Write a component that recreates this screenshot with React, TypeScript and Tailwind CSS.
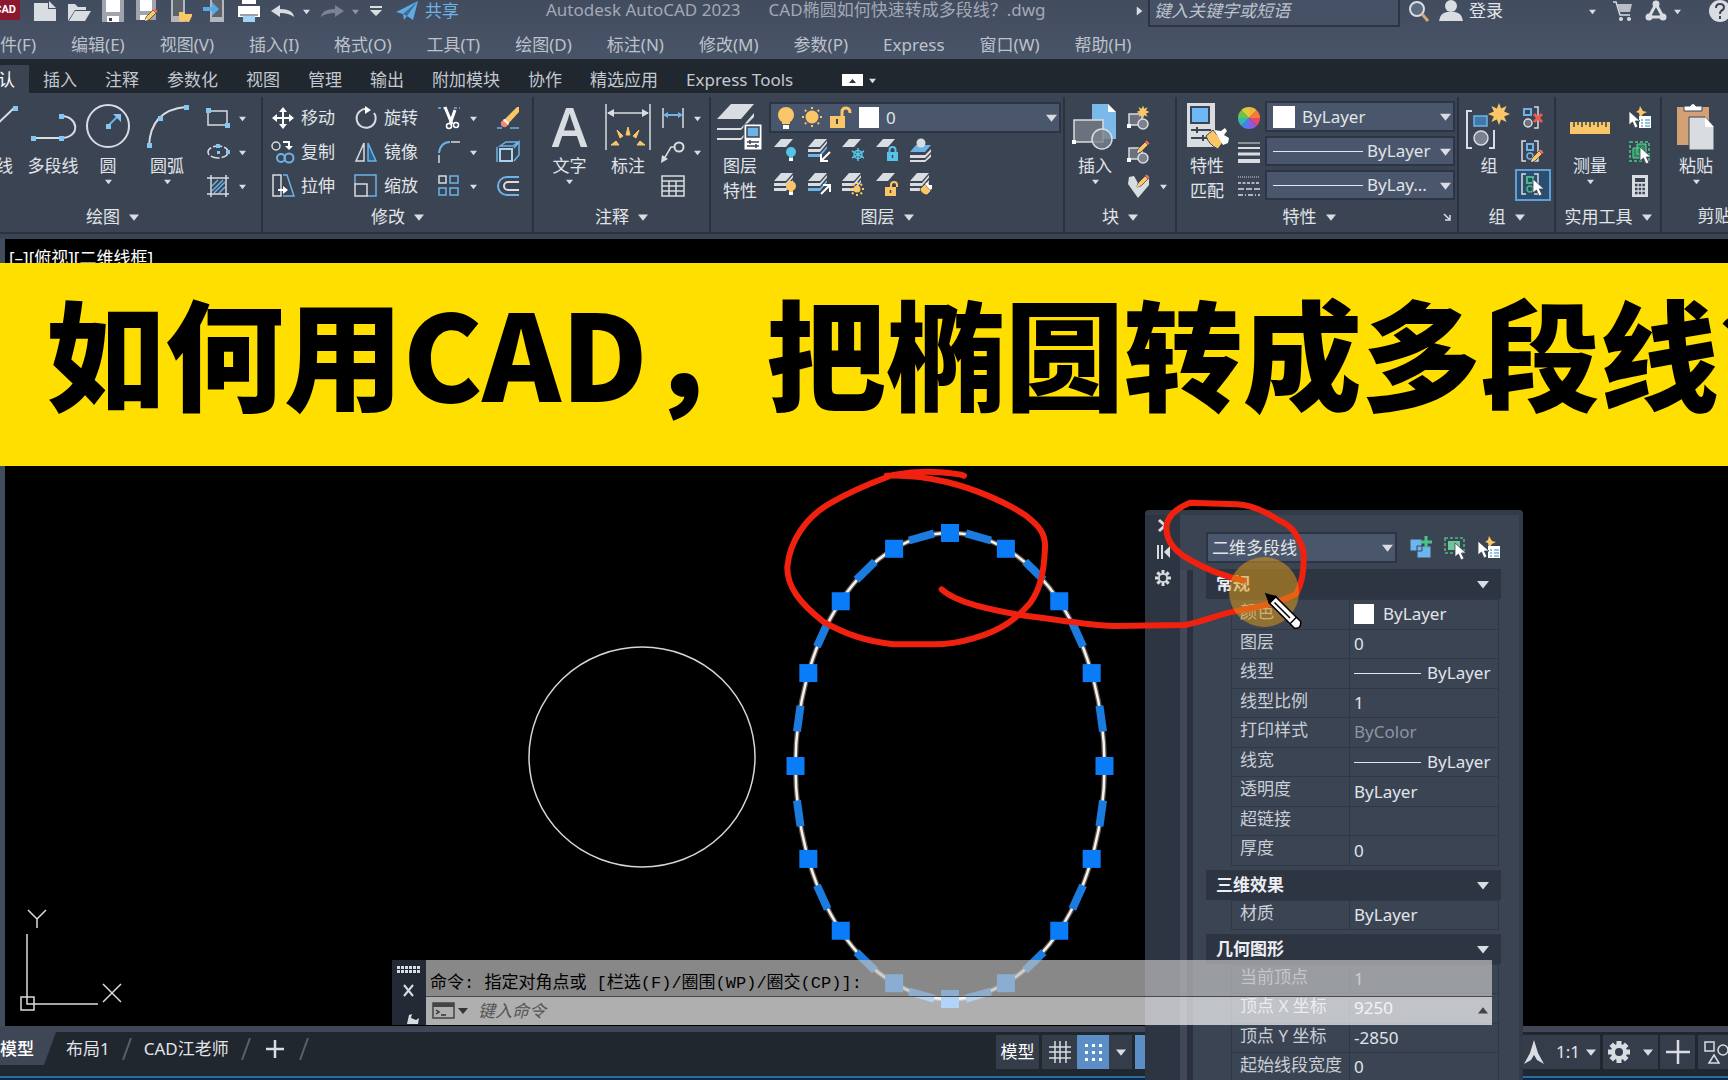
import React from 'react';
import type { ReactNode } from 'react';

const LIGHT = '#d9dce1';
const BLUE = '#6db3e8';
const GOLD = '#fbc667';

const Svg = ({ w = 24, h = 24, className = '', children }: { w?: number; h?: number; className?: string; children: ReactNode }) => (
  <svg width={w} height={h} viewBox={`0 0 ${w} ${h}`} fill="none" className={`shrink-0 ${className}`} aria-hidden="true">
    {children}
  </svg>
);

const Caret = ({ size = 8, color = LIGHT }: { size?: number; color?: string }) => (
  <svg width={size} height={size} viewBox="0 0 8 8" className="shrink-0" aria-hidden="true">
    <path d="M0 2h8L4 7z" fill={color} />
  </svg>
);

const Dot = ({ x, y }: { x: number; y: number }) => <rect x={x - 2} y={y - 2} width="5" height="5" fill="#83c8f4" />;

const Pencil = ({ x = 0, y = 0 }: { x?: number; y?: number }) => (
  <g transform={`translate(${x} ${y})`}>
    <path d="M0 13l1-4 7-7 3 3-7 7z" fill={GOLD} stroke="#3b3027" strokeWidth=".7" />
    <path d="M8 2l1.500-1.500q1 0 3 3L11 5z" fill="#ef7264" />
    <path d="M0 13l1-3 2 2z" fill="#f3ead8" />
  </g>
);

const Bulb = ({ x, y, c = GOLD }: { x: number; y: number; c?: string }) => (
  <g transform={`translate(${x} ${y})`}>
    <circle cx="5" cy="5" r="5" fill={c} />
    <path d="M3 9h4v3H3z" fill={c} />
    <path d="M3 11h4v3H3z" fill="#fff" />
  </g>
);

const Sun = ({ x, y, r = 4 }: { x: number; y: number; r?: number }) => (
  <g transform={`translate(${x} ${y})`}>
    <circle r={r} fill={GOLD} />
    {[0, 45, 90, 135, 180, 225, 270, 315].map((a) => (
      <path key={a} d={`M0 ${-r - 1.5}v-2`} stroke={GOLD} strokeWidth="2" transform={`rotate(${a})`} />
    ))}
  </g>
);

const Star = ({ x, y, s = 1 }: { x: number; y: number; s?: number }) => (
  <path
    transform={`translate(${x} ${y}) scale(${s})`}
    d="M0-13l2.500 6.500 6.500-3-3 6.500 7 3-7 3 3 6.500-6.500-3L0 13l-2.500-6.500-6.500 3 3-6.500-7-3 7-3-3-6.500 6.500 3z"
    fill={GOLD}
  />
);

const Lock = ({ x, y, c, open = false }: { x: number; y: number; c: string; open?: boolean }) => (
  <g transform={`translate(${x} ${y})`}>
    <path d={open ? 'M6 6V3a3 3 0 0 1 6 0v2' : 'M2.500 6V3a3 3 0 0 1 6 0v3'} stroke={c} strokeWidth="2" />
    <rect y="5" width="11" height="9" fill={c} />
    <path d="M5.500 8v3" stroke="#3b4453" strokeWidth="1.500" />
  </g>
);

const Cursor = ({ x, y }: { x: number; y: number }) => (
  <path transform={`translate(${x} ${y})`} d="M0 0v14l3.500-3 2.500 6 3-1.500-2.700-5.500H11z" fill="#fff" stroke="#3b4453" strokeWidth=".8" />
);

const Sheets = ({ n = 3, blue = false }: { n?: number; blue?: boolean }) => (
  <g>
    <path d="M8 1h12l-7 8H1z" fill={LIGHT} />
    {n > 1 && <path d="M1 11h12l7-8v2.500L13 14H1z" fill={LIGHT} />}
    {n > 2 && <path d="M1 16h12l7-8v2.500L13 19H1z" fill={blue ? BLUE : LIGHT} />}
  </g>
);

/* ribbon icons */
const icons = {
  line: <Svg w={48} h={48}><path d="M2 44L42 6" stroke={LIGHT} strokeWidth="2" /><Dot x={43} y={6} /></Svg>,
  pline: (
    <Svg w={48} h={48}>
      <path d="M4 36h28c20 0 18-22 0-22" stroke={LIGHT} strokeWidth="2" />
      <Dot x={4} y={36} /><Dot x={32} y={36} /><Dot x={32} y={14} />
    </Svg>
  ),
  circle: (
    <Svg w={48} h={48}>
      <circle cx="24" cy="24" r="21" stroke={LIGHT} strokeWidth="2" />
      <path d="M24 24l9-9" stroke={BLUE} strokeWidth="2" /><path d="M29 12h8v8z" fill="#83c8f4" />
      <Dot x={24} y={24} />
    </Svg>
  ),
  arc: (
    <Svg w={48} h={48}>
      <path d="M6 44C7 20 20 7 43 5" stroke={LIGHT} strokeWidth="2" />
      <Dot x={6} y={43} /><Dot x={17} y={16} /><Dot x={43} y={5} />
    </Svg>
  ),
  rect: <Svg><rect x="2" y="5" width="19" height="14" stroke={LIGHT} strokeWidth="1.500" /><Dot x={2} y={4} /><Dot x={21} y={19} /></Svg>,
  ellipse: (
    <Svg>
      <ellipse cx="12" cy="12" rx="10" ry="6" stroke={LIGHT} strokeWidth="1.500" strokeDasharray="9 2" />
      <path d="M10 4h4v4h-4zM20 10h4v4h-4zM11 11h3v3h-3z" fill="#83c8f4" />
    </Svg>
  ),
  hatch: (
    <Svg>
      <path d="M6 12l6-6M6 17L17 6M8 19L19 8M13 19l6-6" stroke={BLUE} strokeWidth="1.500" />
      <path d="M5 1v22M20 1v22M1 4h22M1 20h22" stroke={LIGHT} strokeWidth="1.500" />
    </Svg>
  ),
  move: <Svg><path d="M12 1l4 5h-8zM12 23l4-5h-8zM1 12l5-4v8zM23 12l-5-4v8z" fill="#fff" /><path d="M12 4v16M4 12h16" stroke="#fff" strokeWidth="2" /></Svg>,
  copy: (
    <Svg>
      <circle cx="5" cy="6" r="4" stroke={LIGHT} strokeWidth="1.500" />
      <path d="M12 2h6v4" stroke="#fff" strokeWidth="2" /><path d="M14 6h8l-4 4z" fill="#fff" />
      <circle cx="10" cy="18" r="4" stroke={BLUE} strokeWidth="2" /><circle cx="18" cy="18" r="4.500" stroke={BLUE} strokeWidth="2" />
    </Svg>
  ),
  stretch: (
    <Svg>
      <path d="M2 1h8v21H2z" stroke={LIGHT} strokeWidth="1.500" />
      <path d="M12 1h4l7 21H12" stroke={BLUE} strokeWidth="1.500" />
      <path d="M7 16h7" stroke="#fff" strokeWidth="2" /><path d="M12 12l5 4-5 4z" fill="#fff" />
    </Svg>
  ),
  rotate: <Svg><path d="M14 3A9.500 9.500 0 1 0 20 7" stroke={LIGHT} strokeWidth="2" /><path d="M11 0l6 4-6 4z" fill="#fff" /></Svg>,
  mirror: (
    <Svg>
      <path d="M10 3v18H2z" stroke={LIGHT} strokeWidth="1.500" />
      <path d="M14 3v18h8z" fill="#2d628c" stroke={BLUE} strokeWidth="1.500" />
    </Svg>
  ),
  scale: <Svg><path d="M1 10V1h21v21h-9" stroke={BLUE} strokeWidth="1.500" /><path d="M1 10h12v12H1z" stroke={LIGHT} strokeWidth="1.500" /></Svg>,
  trim: (
    <Svg>
      <path d="M1 2h7M17 2h6" stroke={BLUE} strokeWidth="1.500" strokeDasharray="3 2" />
      <path d="M8 1l7 17M18 4l-5 14" stroke="#fff" strokeWidth="3" />
      <circle cx="12" cy="20" r="2.500" stroke="#fff" strokeWidth="1.500" /><circle cx="19" cy="19" r="2.500" stroke="#fff" strokeWidth="1.500" />
    </Svg>
  ),
  fillet: <Svg><path d="M2 13C3 6 7 2 13 2" stroke={BLUE} strokeWidth="2" /><path d="M14 2h9M2 15v8" stroke={LIGHT} strokeWidth="1.500" /></Svg>,
  array: (
    <Svg>
      <path d="M2 2h7v7H2z" stroke={LIGHT} strokeWidth="1.500" />
      <path d="M13 2h8v7h-8zM2 14h7v7H2zM13 14h8v7h-8z" stroke={BLUE} strokeWidth="1.500" />
    </Svg>
  ),
  erase: (
    <Svg>
      <path d="M1 22h5M14 22h9" stroke={BLUE} strokeWidth="1.500" />
      <path d="M8 14L21 1h2v5L12 18z" fill={GOLD} /><path d="M5 16l3-3 5 5-3 3q-6 1-5-5z" fill="#f0877c" /><path d="M7 14l2-1 4 4-1 2z" fill="#fff" />
    </Svg>
  ),
  explode: (
    <Svg>
      <path d="M4 9h12v12H4z" stroke="#a9d2ef" strokeWidth="2" />
      <path d="M1 22V7M4 6l6-4h12l-5 4zM18 8l5-6v13l-5 6" stroke={BLUE} strokeWidth="1.500" />
    </Svg>
  ),
  offset: <Svg><path d="M23 3H11a9 9 0 0 0 0 18h12" stroke={BLUE} strokeWidth="2" /><path d="M23 8H12a4 4 0 0 0 0 8h11" stroke={LIGHT} strokeWidth="2" /></Svg>,
  dim: (
    <Svg w={48} h={48}>
      <path d="M2 2v46M46 2v46M4 11h40" stroke={LIGHT} strokeWidth="1.500" />
      <path d="M3 11l7-4v8zM45 11l-7-4v8z" fill={LIGHT} />
      <path d="M22 33l2-8 2 8zM16 36l-3-8 6 6zM32 36l3-8-6 6zM12 39l-5 4h8zM36 39l5 4h-8z" fill={GOLD} stroke={GOLD} />
    </Svg>
  ),
  linear: <Svg><path d="M2 2v20M22 2v20" stroke={LIGHT} strokeWidth="1.500" /><path d="M4 9h16" stroke={BLUE} strokeWidth="2" /><path d="M2 9l5-3v6zM22 9l-5-3v6z" fill={BLUE} /></Svg>,
  leader: <Svg><circle cx="18" cy="7" r="4.500" stroke={LIGHT} strokeWidth="2" /><path d="M13 7h-3L3 19" stroke={LIGHT} strokeWidth="1.500" /><path d="M0 23l1-8 6 4z" fill={LIGHT} /></Svg>,
  table: <Svg><path d="M1 2h22v20H1zM1 7h22M1 12h22M1 17h22M8 7v15M15 7v15" stroke={LIGHT} strokeWidth="1.500" /></Svg>,
  layerProps: (
    <Svg w={48} h={48}>
      <path d="M15 2h23L25 17H1z" fill={LIGHT} /><path d="M1 26h24l13-15v4L25 28H1z" fill={LIGHT} />
      <path d="M1 36h24l13-15v4L25 38H1z" fill={LIGHT} />
      <path d="M28 22h18v26H28z" fill="#fff" stroke="#3b4453" />
      <path d="M31 25h12v10H31z" fill={BLUE} stroke="#3b4453" strokeWidth="1.500" /><path d="M31 40h12M31 44h12M34 38v4M40 42v4" stroke="#3b4453" strokeWidth="1.500" />
    </Svg>
  ),
  insert: (
    <Svg w={48} h={48}>
      <path d="M21 2h16l8 8v27H21z" fill="#7ab9ea" /><path d="M37 2l8 8h-8z" fill="#fff" />
      <path d="M3 18h29v22H3z" fill="#6c727d" stroke={LIGHT} strokeWidth="1.500" /><path d="M1 38h4v4H1z" fill="#fff" />
      <circle cx="31" cy="37" r="10" fill="#7b828d" fillOpacity=".8" stroke={LIGHT} strokeWidth="1.500" />
    </Svg>
  ),
  match: (
    <Svg w={48} h={48}>
      <path d="M4 1h28v44H4z" fill={LIGHT} /><path d="M8 5h18v16H8z" fill="#6db8f5" stroke="#3b4453" strokeWidth="2" />
      <path d="M8 28h20M8 36h18M14 25v6M20 33v6" stroke="#3b4453" strokeWidth="2" />
      <path d="M23 34l7-6 10 12-5 7q-9-4-12-13z" fill={GOLD} stroke="#3b4453" />
      <path d="M31 28l7 1 4-3 2 3-3 4 5 3-1 5-5 2z" fill="#fff" />
    </Svg>
  ),
  group: (
    <Svg w={48} h={48}>
      <path d="M7 9H2v37h5M24 46h5V28" stroke={LIGHT} strokeWidth="2" />
      <path d="M9 14h13v10H9z" fill="#3f79ab" stroke={BLUE} strokeWidth="1.500" />
      <circle cx="16" cy="36" r="7" fill="#7b828d" stroke={LIGHT} strokeWidth="1.500" />
      <Star x={34} y={12} s={0.85} />
    </Svg>
  ),
  measure: (
    <Svg w={48} h={48}>
      <path d="M4 20h40v12H4z" fill={GOLD} />
      <path d="M8 20v5M12 20v3M16 20v5M20 20v3M24 20v5M28 20v3M32 20v5M36 20v3M40 20v5" stroke="#3b4453" strokeWidth="1.500" />
    </Svg>
  ),
  paste: (
    <Svg w={48} h={48}>
      <path d="M5 5h32v38H5z" fill="#d3a173" /><path d="M12 9V4h6q3-5 6 0h6v5z" fill="#fff" stroke="#3b4453" />
      <path d="M17 15h16l9 10v23H17z" fill={LIGHT} stroke="#3b4453" /><path d="M33 15l9 10h-9z" fill="#fff" />
    </Svg>
  ),
};

const layerRowA = [
  <Svg><Sheets n={1} /><Bulb x={13} y={9} c="#56c3e6" /></Svg>,
  <Svg><Sheets blue /><path d="M23 14l-8 8M14 16v7h7" stroke="#fff" strokeWidth="2" /></Svg>,
  <Svg><Sheets n={1} /><path d="M17 10v13M11 13l12 7M23 13l-12 7" stroke="#56c3e6" strokeWidth="1.500" /><circle cx="17" cy="16.500" r="4" stroke="#56c3e6" strokeWidth="1.500" /></Svg>,
  <Svg><Sheets n={1} /><Lock x={12} y={9} c="#56c3e6" /></Svg>,
  <Svg><path d="M7 7h15l-6 7H1z" fill={BLUE} /><path d="M1 17h15l6-6v3l-6 6H1zM1 22h15l6-6v3l-6 5H1z" fill={LIGHT} /><circle cx="12" cy="5" r="4.500" fill={LIGHT} /></Svg>,
];
const layerRowB = [
  <Svg><Sheets /><Bulb x={13} y={9} /></Svg>,
  <Svg><Sheets blue /><path d="M14 22l8-8M16 13h7v7" stroke="#fff" strokeWidth="2" /></Svg>,
  <Svg><Sheets /><Sun x={16} y={17} r={3.5} /></Svg>,
  <Svg><Sheets n={1} /><Lock x={10} y={10} c={GOLD} open /></Svg>,
  <Svg><Sheets /><path d="M11 17l5-5 6 7-4 4q-6-1-7-6z" fill={GOLD} stroke="#3b4453" strokeWidth=".8" /><path d="M16 12l3-2 1 3 3 0v4l-2 1z" fill="#fff" /></Svg>,
];

const BlockBase = () => (
  <g>
    <path d="M2 8h13v11H2z" fill="#6c727d" stroke={LIGHT} strokeWidth="1.500" /><path d="M0 18h4v4H0z" fill="#fff" />
    <circle cx="16" cy="18" r="5" fill="#7b828d" stroke={LIGHT} strokeWidth="1.500" />
  </g>
);
const blockIcons = [
  <Svg><BlockBase /><Star x={16} y={6} s={0.5} /></Svg>,
  <Svg><BlockBase /><Pencil x={10} y={0} /></Svg>,
  <Svg><path d="M2 3l5-1 5 9 5-6h5v6l-11 13L1 10z" fill={LIGHT} /><Pencil x={10} y={0} /></Svg>,
];

const GroupBase = ({ c = BLUE }: { c?: string }) => (
  <g>
    <path d="M5 1H1v20h4M13 1h4v20h-4" stroke={LIGHT} strokeWidth="1.500" />
    <path d="M6 4h6v6H6z" stroke={c} strokeWidth="2" /><circle cx="9" cy="16" r="3" stroke={c} strokeWidth="1.500" />
  </g>
);
const groupIcons = [
  <Svg><path d="M13 1h4v21h-4" stroke={LIGHT} strokeWidth="1.500" /><path d="M3 3h7v6H3z" stroke={BLUE} strokeWidth="2" /><circle cx="7" cy="17" r="4" fill="#6c727d" stroke={LIGHT} strokeWidth="1.500" /><path d="M13 8l8 8M21 8l-8 8" stroke="#ec5a50" strokeWidth="3" /></Svg>,
  <Svg><GroupBase /><Pencil x={10} y={9} /></Svg>,
  <Svg><GroupBase c="#4cb583" /><Cursor x={12} y={6} /></Svg>,
];

const QuickSelect = () => (
  <Svg>
    <path d="M12 0l3 5 4 1-4 2-3 4-1-5-3-1 3-2z" fill={GOLD} />
    <path d="M11 10h12v12H11z" fill="#fff" /><path d="M13 14h2M13 17h2M13 20h2M17 14h5M17 17h5M17 20h5" stroke="#2c83c4" />
    <Cursor x={1} y={5} />
  </Svg>
);
const SelectBox = () => (
  <Svg>
    <path d="M2 2h19v15H2z" stroke="#52b788" strokeWidth="1.500" strokeDasharray="3 2" /><path d="M5 5h12v9H5z" fill="#6cc79b" />
    <Cursor x={12} y={7} />
  </Svg>
);
const utilIcons = [
  <QuickSelect />,
  <Svg><path d="M2 2h19v19H2z" stroke="#3fae77" strokeWidth="2" strokeDasharray="3 2" /><path d="M9 4h9v10H9zM5 8h9v10H5z" fill="#2d8a5c" stroke="#62d39a" /><Cursor x={12} y={7} /></Svg>,
  <Svg><path d="M4 1h16v22H4z" fill={LIGHT} /><path d="M7 4h10v4H7z" fill="#3b4453" /><path d="M7 11h10M7 15h10M7 19h10" stroke="#3b4453" strokeWidth="2.500" strokeDasharray="2.500 1.200" /></Svg>,
];

const ColorWheel = () => (
  <Svg>
    {['#f2b43c', '#f4793b', '#e8476a', '#8d5be0', '#4a7ff0', '#35b8b0', '#6cc24a', '#d5cf3d'].map((c, i) => (
      <path key={c} d="M12 12V1a11 11 0 0 1 7.800 3.200z" fill={c} transform={`rotate(${i * 45} 12 12)`} />
    ))}
  </Svg>
);

/* ribbon parts */
const BigButton = ({ icon, lines, caret, className = 'w-14' }: { icon: ReactNode; lines: string[]; caret?: boolean; className?: string }) => (
  <button type="button" className={`flex shrink-0 flex-col items-center whitespace-nowrap leading-[25px] ${className}`}>
    <span className="flex h-[52px] items-start justify-center pt-px">{icon}</span>
    {lines.map((l) => <span key={l}>{l}</span>)}
    {caret && <Caret size={7} />}
  </button>
);

const SmallButton = ({ icon, label, caret, name }: { icon: ReactNode; label?: string; caret?: boolean; name?: string }) => (
  <button type="button" aria-label={label ?? name} className="flex h-[34px] shrink-0 items-center gap-[6px] whitespace-nowrap">
    {icon}
    {label && <span>{label}</span>}
    {caret && <span className="ml-[3px] flex"><Caret size={7} /></span>}
  </button>
);

const Panel = ({ title, className, launcher, caret = true, children }: { title: string; className: string; launcher?: boolean; caret?: boolean; children: ReactNode }) => (
  <section className={`flex shrink-0 flex-col border-r-2 border-[#2a3240] ${className}`}>
    <div className="flex h-[105px] items-start">{children}</div>
    <div className="flex h-8 items-center">
      <button type="button" className="flex flex-1 items-center justify-center gap-[9px] whitespace-nowrap">
        {title}
        {caret && <Caret size={10} />}
      </button>
      {launcher && (
        <button type="button" aria-label="特性" className="pr-1">
          <Svg w={12} h={12}><path d="M3 3l5 5M9 4v5H4" stroke={LIGHT} strokeWidth="1.500" /></Svg>
        </button>
      )}
    </div>
  </section>
);

const Combo = ({ label, value, before, className = '' }: { label: string; value: string; before?: ReactNode; className?: string }) => (
  <div className={`relative flex items-center border-2 border-[#2c3545] bg-[#4a566b] ${className}`}>
    {before}
    <select aria-label={label} defaultValue={value} className="h-full min-w-0 flex-1 appearance-none bg-transparent pr-4 outline-none">
      <option>{value}</option>
    </select>
    <span className="pointer-events-none absolute right-0.5 flex"><Caret size={11} /></span>
  </div>
);

const LineSample = ({ className = 'w-[90px]' }: { className?: string }) => <span className={`h-px shrink-0 bg-[#e3e6ea] ${className}`} />;

/* quick access icons in the title bar */
const quickIcons: [string, ReactNode][] = [
  ['新建', <Svg h={22}><path d="M1 3h14v6h8v12H1z" fill={LIGHT} /><path d="M16 1l7 7h-7z" fill={LIGHT} /></Svg>],
  ['打开', <Svg h={22}><path d="M1 21V4h7l3 3h8v3H8z" fill={LIGHT} /><path d="M8 11h16l-6 10H2z" fill={LIGHT} /></Svg>],
  ['保存', <Svg h={22}><path d="M1 0h22v22H1z" fill="#9fa4ad" /><path d="M5 0h14v12H5zM6 16h12v6H6z" fill="#fff" /><path d="M8 18h3v3H8z" fill="#3b4453" /></Svg>],
  ['另存为', <Svg h={22}><path d="M1 0h20v20H1z" fill="#9fa4ad" /><path d="M5 0h12v11H5zM5 15h8v5H5z" fill="#fff" /><Pencil x={10} y={8} /></Svg>],
  ['从移动端打开', <Svg h={22}><path d="M2 0h14v22H2z" fill="#b4b8be" /><path d="M4 0h10v16H4z" fill="#5c6269" /><path d="M10 21V12h5l1 2h7v2l-3 6z" fill={GOLD} /></Svg>],
  ['保存到移动端', <Svg h={22}><path d="M7 0h14v22H7z" fill="#b4b8be" /><path d="M9 0h10v17H9z" fill="#5c6269" /><path d="M0 7h9V2l7 7-7 7v-5H0z" fill="#59a9e6" /></Svg>],
  ['打印', <Svg h={22}><path d="M5 0h14v4H5zM1 6h22v11H1z" fill="#fff" /><path d="M6 16h12v6H6z" fill="#a5d4f2" /><path d="M3 15h18" stroke="#3b4453" /></Svg>],
];

const menus = ['文件(F)', '编辑(E)', '视图(V)', '插入(I)', '格式(O)', '工具(T)', '绘图(D)', '标注(N)', '修改(M)', '参数(P)', 'Express', '窗口(W)', '帮助(H)'];
const tabs = ['默认', '插入', '注释', '参数化', '视图', '管理', '输出', '附加模块', '协作', '精选应用', 'Express Tools'];

const TitleBar = () => (
  <header className="flex h-[27px] items-start overflow-hidden">
    <div className="flex h-5 w-5 shrink-0 items-center justify-end overflow-hidden bg-[#8c1730] pr-1 font-['Roboto',sans-serif] text-[11px] font-bold text-white">CAD</div>
    <div className="ml-[13px] flex h-[22px] items-center gap-[10px]">
      {quickIcons.map(([name, icon]) => (
        <button key={name} type="button" aria-label={name}>{icon}</button>
      ))}
      <button type="button" aria-label="放弃" className="flex items-center gap-2">
        <Svg h={22}><path d="M0 11l9-6v4q13 0 14 8-5-4-14-4v4z" fill={LIGHT} /></Svg><Caret size={7} />
      </button>
      <button type="button" aria-label="重做" className="flex items-center gap-2">
        <Svg h={22}><path d="M24 11l-9-6v4Q2 9 1 17q5-4 14-4v4z" fill="#7a8393" /></Svg><Caret size={7} color="#8f97a5" />
      </button>
      <button type="button" aria-label="自定义">
        <Svg w={14} h={22}><path d="M1 6h12v2H1zM1 10h12l-6 6z" fill={LIGHT} /></Svg>
      </button>
      <button type="button" className="flex items-center gap-[6px] pl-0.5 text-[#6fb2e6]">
        <Svg h={22}><path d="M1 12L23 1l-5 19-6-4-3 4-1-6z" fill="#5fa9e4" /><path d="M8 14L22 2 12 16z" fill="#3f6d96" /></Svg>
        共享
      </button>
    </div>
    <div className="ml-[87px] flex h-5 flex-1 gap-7 whitespace-pre leading-5 text-[#a2a9b5]">
      <span>Autodesk AutoCAD 2023</span>
      <span>CAD椭圆如何快速转成多段线？.dwg</span>
    </div>
    <div className="flex shrink-0 items-start">
      <span className="mr-1 flex h-[22px] w-[11px] -rotate-90 items-center justify-center"><Caret size={9} /></span>
      <input
        type="text"
        aria-label="搜索"
        placeholder="键入关键字或短语"
        className="h-[27px] w-[252px] border-2 border-t-0 border-[#2c3545] bg-[#465165] px-1 pb-1 italic outline-none placeholder:text-[#bcc2cb]"
      />
      <div className="ml-2 flex h-[22px] items-center">
        <button type="button" aria-label="搜索">
          <Svg w={22} h={22}><circle cx="9" cy="9" r="7" fill="#5b6b80" stroke={LIGHT} strokeWidth="2" /><path d="M14 14l6 7" stroke="#cfa878" strokeWidth="3" /></Svg>
        </button>
        <button type="button" className="ml-[9px] flex items-center gap-[6px]">
          <Svg h={22}><circle cx="12" cy="6" r="6" fill={LIGHT} /><path d="M0 21q1-8 8-9h8q7 1 8 9z" fill={LIGHT} /></Svg>
          登录
        </button>
        <button type="button" aria-label="账户" className="ml-[86px]"><Caret size={7} /></button>
        <button type="button" aria-label="购物车" className="ml-[17px]">
          <Svg w={20} h={22}><path d="M0 2h3l4 13h10" stroke={LIGHT} strokeWidth="1.500" /><path d="M4 4h15l-2 8H7z" fill="#b9bdc4" /><circle cx="8" cy="19" r="2" fill={LIGHT} /><circle cx="16" cy="19" r="2" fill={LIGHT} /></Svg>
        </button>
        <button type="button" aria-label="应用" className="ml-[12px] flex items-center gap-[7px]">
          <Svg w={22} h={22}><path d="M11 4L4 17h14z" stroke={LIGHT} strokeWidth="3" /><circle cx="11" cy="4" r="3.500" fill={LIGHT} /><circle cx="4" cy="17" r="3.500" fill={LIGHT} /><circle cx="18" cy="17" r="3.500" fill={LIGHT} /></Svg>
          <Caret size={7} />
        </button>
        <button type="button" aria-label="帮助" className="-mr-1 ml-[27px]">
          <Svg h={22}><circle cx="12" cy="11" r="11" fill={LIGHT} /><path d="M8 8q0-4 4-4t4 3.500q0 2-3 3.500-1 1-1 3M12 16v3" stroke="#3b4453" strokeWidth="2" /></Svg>
        </button>
      </div>
    </div>
  </header>
);

const Ribbon = () => (
  <div className="flex h-[141px] overflow-hidden border-b-2 border-[#2a3240] bg-[#3b4453] pt-1">
    <Panel title="绘图" className="-ml-9 w-[299px]">
      <div className="flex pl-1 pt-1">
        <BigButton icon={icons.line} lines={['直线']} />
        <BigButton icon={icons.pline} lines={['多段线']} className="w-[58px]" />
        <BigButton icon={icons.circle} lines={['圆']} caret className="w-[52px]" />
        <BigButton icon={icons.arc} lines={['圆弧']} caret className="w-[66px]" />
      </div>
      <div className="ml-[6px] pt-1">
        <SmallButton icon={icons.rect} name="矩形" caret />
        <SmallButton icon={icons.ellipse} name="椭圆" caret />
        <SmallButton icon={icons.hatch} name="图案填充" caret />
      </div>
    </Panel>
    <Panel title="修改" className="w-[271px]">
      <div className="flex gap-[19px] pl-2 pt-1">
        <div>
          <SmallButton icon={icons.move} label="移动" />
          <SmallButton icon={icons.copy} label="复制" />
          <SmallButton icon={icons.stretch} label="拉伸" />
        </div>
        <div>
          <SmallButton icon={icons.rotate} label="旋转" />
          <SmallButton icon={icons.mirror} label="镜像" />
          <SmallButton icon={icons.scale} label="缩放" />
        </div>
        <div>
          <SmallButton icon={icons.trim} name="修剪" caret />
          <SmallButton icon={icons.fillet} name="圆角" caret />
          <SmallButton icon={icons.array} name="阵列" caret />
        </div>
        <div>
          <SmallButton icon={icons.erase} name="删除" />
          <SmallButton icon={icons.explode} name="分解" />
          <SmallButton icon={icons.offset} name="偏移" />
        </div>
      </div>
    </Panel>
    <Panel title="注释" className="w-[177px]">
      <div className="flex pl-[6px] pt-1">
        <BigButton
          icon={<span className="font-['Open_Sans',sans-serif] text-[54px] font-semibold leading-[48px] text-[#d9dce1]">A</span>}
          lines={['文字']}
          caret
          className="w-[59px]"
        />
        <BigButton icon={icons.dim} lines={['标注']} className="w-[58px]" />
        <div className="ml-1">
          <SmallButton icon={icons.linear} name="线性" caret />
          <SmallButton icon={icons.leader} name="引线" caret />
          <SmallButton icon={icons.table} name="表格" />
        </div>
      </div>
    </Panel>
    <Panel title="图层" className="w-[354px]">
      <div className="pt-1"><BigButton icon={icons.layerProps} lines={['图层', '特性']} className="w-[58px]" /></div>
      <div className="flex min-w-0 flex-1 flex-col pr-[2px] pt-[5px]">
        <Combo
          label="图层"
          value="0"
          className="h-[31px]"
          before={
            <>
              <Svg w={84} h={24} className="ml-1">
                <circle cx="11" cy="9" r="8" fill={GOLD} /><path d="M7 16h8v2H7z" fill={GOLD} /><path d="M8 19h6v4H8z" fill="#fff" />
                <Sun x={37} y={11} r={6.5} />
                <path d="M67 10V6q0-4 4-4t4 5" stroke={GOLD} strokeWidth="3" /><path d="M55 10h15v12H55z" fill={GOLD} /><path d="M62 13v5" stroke="#3b4453" strokeWidth="2" />
              </Svg>
              <span className="mr-[7px] h-[21px] w-5 bg-white" />
            </>
          }
        />
        <div className="flex gap-[10px] pl-1">
          {layerRowA.map((icon, i) => <SmallButton key={i} name={`图层工具 ${i + 1}`} icon={icon} />)}
        </div>
        <div className="flex gap-[10px] pl-1">
          {layerRowB.map((icon, i) => <SmallButton key={i} name={`图层工具 ${i + 6}`} icon={icon} />)}
        </div>
      </div>
    </Panel>
    <Panel title="块" className="w-[112px]">
      <div className="flex pl-1 pt-1">
        <BigButton icon={icons.insert} lines={['插入']} caret className="w-[52px]" />
        <div className="ml-[6px]">
          <SmallButton icon={blockIcons[0]} name="创建块" />
          <SmallButton icon={blockIcons[1]} name="编辑块" />
          <SmallButton icon={blockIcons[2]} name="编辑属性" caret />
        </div>
      </div>
    </Panel>
    <Panel title="特性" className="w-[282px]" launcher>
      <div className="pl-0.5 pt-1"><BigButton icon={icons.match} lines={['特性', '匹配']} /></div>
      <div className="ml-0.5 pt-1">
        <SmallButton icon={<ColorWheel />} name="颜色" />
        <SmallButton icon={<Svg><path d="M1 3h22" stroke={LIGHT} /><path d="M1 8h22" stroke={LIGHT} strokeWidth="2" /><path d="M1 14h22" stroke={LIGHT} strokeWidth="3" /><path d="M1 21h22" stroke={LIGHT} strokeWidth="4" /></Svg>} name="线宽" />
        <SmallButton icon={<Svg><path d="M1 3h22" stroke={LIGHT} strokeDasharray="1 1" /><path d="M1 9h22" stroke={LIGHT} strokeWidth="1.500" strokeDasharray="3 1.500" /><path d="M1 15h22" stroke={LIGHT} strokeWidth="1.500" strokeDasharray="6 2" /><path d="M1 21h22" stroke={LIGHT} strokeWidth="1.500" strokeDasharray="5 2 1 2" /></Svg>} name="线型" />
      </div>
      <div className="flex min-w-0 flex-1 flex-col gap-1 pl-1 pr-[2px] pt-1">
        <Combo label="颜色" value="ByLayer" className="h-[31px]" before={<span className="ml-[6px] mr-[7px] h-[22px] w-[22px] shrink-0 bg-white" />} />
        <Combo label="线宽" value="ByLayer" className="h-[30px]" before={<span className="ml-[6px] mr-1 flex"><LineSample /></span>} />
        <Combo label="线型" value="ByLay..." className="h-[30px]" before={<span className="ml-[6px] mr-1 flex"><LineSample /></span>} />
      </div>
    </Panel>
    <Panel title="组" className="w-[97px]">
      <div className="flex pl-1 pt-1">
        <BigButton icon={icons.group} lines={['组']} className="w-[52px]" />
        <div className="flex flex-col items-center">
          <SmallButton icon={groupIcons[0]} name="解除编组" />
          <SmallButton icon={groupIcons[1]} name="组编辑" />
          <div className="h-8 border-2 border-[#5f9fd4] bg-[#2b4e70] px-1 [&>button]:h-7"><SmallButton icon={groupIcons[2]} name="启用组选择" /></div>
        </div>
      </div>
    </Panel>
    <Panel title="实用工具" className="w-[106px]">
      <div className="flex pl-[6px] pt-1">
        <BigButton icon={icons.measure} lines={['测量']} caret />
        <div className="ml-[10px]">
          {utilIcons.map((icon, i) => <SmallButton key={i} name={['快速选择', '全部选择', '计算器'][i]} icon={icon} />)}
        </div>
      </div>
    </Panel>
    <Panel title="剪贴板" className="w-[124px]" caret={false}>
      <div className="pl-[6px] pt-1"><BigButton icon={icons.paste} lines={['粘贴']} caret /></div>
    </Panel>
  </div>
);

/* model space: sixteen grips round the polyline, with a mid-segment bar between each two */
const CX = 950;
const CY = 532;
const quarter = [0, 23.5, 45, 68.8];
const angles = [...quarter, 90, ...quarter.slice(1).reverse().map((a) => 180 - a)];
const gripAngles = [...angles, ...angles.map((a) => a + 180)];

const onEllipse = (deg: number) => {
  const t = (deg * Math.PI) / 180;
  return { x: CX + 154.5 * Math.cos(t), y: CY - 233 * Math.sin(t) };
};
const grips = gripAngles.map(onEllipse);
const bars = gripAngles.map((start, i) => {
  const deg = (start + (gripAngles[i + 1] ?? 360)) / 2;
  const a = onEllipse(deg - 3);
  const b = onEllipse(deg + 3);
  return { ...onEllipse(deg), angle: (Math.atan2(b.y - a.y, b.x - a.x) * 180) / Math.PI };
});

const ModelSpace = () => (
  <main className="relative min-h-0 flex-1 overflow-hidden bg-black">
    <svg className="absolute inset-0 h-full w-full" aria-hidden="true">
      <ellipse cx="642" cy="523" rx="113" ry="110" fill="none" stroke="#d6d6d6" strokeWidth="1.500" />
      <ellipse cx={CX} cy={CY} rx="154.500" ry="233" fill="none" stroke="#5f5750" strokeWidth="5" />
      <ellipse cx={CX} cy={CY} rx="154.500" ry="233" fill="none" stroke="#f4f1ee" strokeWidth="2.500" />
      {bars.map((b, i) => (
        <rect key={i} x={b.x - 13} y={b.y - 4} width="26" height="8" fill="#1b7bdf" transform={`rotate(${b.angle} ${b.x} ${b.y})`} />
      ))}
      {grips.map((g, i) => <rect key={i} x={g.x - 9} y={g.y - 9} width="18" height="18" fill="#0a7cf8" />)}
      <g stroke="#dcdcdc" strokeWidth="1.500" fill="none">
        <path d="M27 700v70h71" /><path d="M21 763h13v13H21z" />
        <path d="M28 676l9 9 9-9M37 685v9M103 750l18 18M121 750l-18 18" />
      </g>
    </svg>
    <div className="absolute inset-y-0 left-0 w-[5px] bg-[#434c5c]" />
    <div className="absolute inset-x-0 top-0 h-[5px] bg-[#3b4453]" />
    <p className="absolute left-[9px] top-3 whitespace-nowrap leading-6 text-white">[–][俯视][二维线框]</p>
  </main>
);

const Slash = () => <Svg w={10} h={22}><path d="M1 22L9 0" stroke="#56606e" strokeWidth="2" /></Svg>;

const StatusBar = () => (
  <footer className="flex h-[54px] flex-col border-t-[6px] border-[#3f4757] bg-[#20272f]">
    <div className="flex h-11 items-start justify-between">
      <nav className="flex h-[33px] items-center whitespace-nowrap">
        <button type="button" className="relative -ml-1 flex h-full w-[60px] items-center pl-1 text-white">
          <svg className="absolute inset-0" width="60" height="33" aria-hidden="true"><path d="M0 0h60L48 33H0z" fill="#3f4757" /></svg>
          <span className="relative font-medium">模型</span>
        </button>
        <button type="button" className="pl-[10px] pr-3">布局1</button>
        <Slash />
        <button type="button" className="px-3">CAD江老师</button>
        <Slash />
        <button type="button" aria-label="新建布局" className="px-[15px]"><Svg w={18} h={18}><path d="M9 0v18M0 9h18" stroke={LIGHT} strokeWidth="2.500" /></Svg></button>
        <Slash />
      </nav>
      <div className="flex h-full shrink-0 items-start gap-[3px] overflow-hidden pt-[3px] [&>*]:h-[34px] [&>*]:bg-[#353d4b]">
        <button type="button" className="w-[43px] text-center text-white">模型</button>
        <div className="flex">
          <button type="button" aria-label="栅格" className="flex w-[35px] items-center justify-center">
            <Svg w={22} h={22}><path d="M6 0v22M11 0v22M17 0v22M0 6h22M0 11h22M0 17h22" stroke={LIGHT} strokeWidth="1.500" /></Svg>
          </button>
          <button type="button" aria-label="捕捉" className="flex w-8 items-center justify-center bg-[#5b8ec6]">
            <Svg w={20} h={20}>{[2, 9, 16].map((y) => [2, 9, 16].map((x) => <rect key={`${x}${y}`} x={x} y={y} width="3" height="3" fill="#fff" />))}</Svg>
          </button>
          <button type="button" aria-label="捕捉设置" className="flex w-[23px] items-center justify-center"><Caret size={10} /></button>
        </div>
        <div className="flex w-[380px] bg-[#5b8ec6]!" />
        <div className="flex w-[82px] items-center gap-2 pl-[6px]">
          <Svg w={20} h={24}><path d="M10 0l4 13 6 11-7-4-3-5-3 5-7 4 6-11z" fill={LIGHT} /></Svg>
          <button type="button" className="flex items-center gap-[6px] pl-1">1:1 <Caret size={10} /></button>
        </div>
        <div className="flex w-[92px]">
          <button type="button" aria-label="设置" className="flex w-[57px] items-center gap-3 border-r-2 border-[#20272f] pl-1">
            <Svg w={24} h={24}>
              {[0, 45, 90, 135].map((a) => <path key={a} d="M12 1v22" stroke={LIGHT} strokeWidth="5" transform={`rotate(${a} 12 12)`} />)}
              <circle cx="12" cy="12" r="8" fill={LIGHT} /><circle cx="12" cy="12" r="4" fill="#353d4b" />
            </Svg>
            <Caret size={10} />
          </button>
          <button type="button" aria-label="注释监视器" className="flex flex-1 items-center justify-center"><Svg w={24} h={24}><path d="M12 0v24M0 12h24" stroke={LIGHT} strokeWidth="2.500" /></Svg></button>
        </div>
        <button type="button" aria-label="隔离对象" className="flex w-[30px] items-center pl-[6px]">
          <Svg w={24} h={26}><path d="M1 3h9v9H1zM10 16l5 8H5z" stroke={LIGHT} strokeWidth="1.500" /><circle cx="19" cy="11" r="5" stroke={LIGHT} strokeWidth="1.500" /></Svg>
        </button>
      </div>
    </div>
    <div className="flex-1 border-t-2 border-[#2b6ca3] bg-[#0c2b4b]" />
  </footer>
);

type Row = [string, ReactNode];

const PropertyGroup = ({ title, rows, className = '' }: { title: string; rows: Row[]; className?: string }) => (
  <section>
    <h3 className="flex h-[30px] items-center justify-between bg-[#2e3542] pl-[10px] pr-3 font-bold text-[#eceef1]">
      {title}
      <Caret size={12} />
    </h3>
    <table className={`ml-[25px] w-[268px] table-fixed border-collapse ${className}`}>
      <tbody>
        {rows.map(([label, value]) => (
          <tr key={label} className="h-[29px]">
            <th scope="row" className="w-[118px] whitespace-nowrap border border-[#2f3846] p-0 pl-2 text-left align-top font-normal leading-6 text-[#c9ced6]">{label}</th>
            <td className="border border-[#2f3846] p-0 pl-1 align-middle leading-6">{value}</td>
          </tr>
        ))}
      </tbody>
    </table>
  </section>
);

const swatchValue = <span className="flex items-center gap-[9px]"><span className="h-5 w-5 bg-white" />ByLayer</span>;
const lineValue = <span className="flex items-center gap-[6px]"><LineSample className="w-[67px]" />ByLayer</span>;

const Palette = () => (
  <aside className="absolute bottom-0 right-[205px] top-[510px] flex w-[378px] overflow-hidden rounded-t border-r-4 border-t-[5px] border-[#333b49] bg-[#3b4453]">
    <div className="flex w-[35px] shrink-0 flex-col items-center gap-[4px] bg-[#2e3542]">
      <button type="button" aria-label="关闭"><Svg w={22} h={22}><path d="M7 5l6 5.500L7 16" stroke={LIGHT} strokeWidth="3" /></Svg></button>
      <button type="button" aria-label="自动隐藏"><Svg w={22} h={22}><path d="M6 4v14M10 4v14" stroke={LIGHT} strokeWidth="2" /><path d="M18 5v12l-6-6z" fill={LIGHT} /></Svg></button>
      <button type="button" aria-label="特性">
        <Svg w={22} h={22}>
          {[0, 45, 90, 135].map((a) => <path key={a} d="M11 3v16" stroke={LIGHT} strokeWidth="3" transform={`rotate(${a} 11 11)`} />)}
          <circle cx="11" cy="11" r="4" fill="#2e3542" stroke={LIGHT} strokeWidth="1.500" />
        </Svg>
      </button>
    </div>
    <div className="mt-[55px] w-[7px] shrink-0 bg-[#414858]" />
    <div className="mt-[55px] w-[6px] shrink-0 bg-[#2a303d]" />
    <div className="flex min-w-0 flex-1 flex-col pl-[13px] pr-[18px] pt-[17px]">
      <div className="mb-[6px] flex items-center">
        <Combo label="对象类型" value="二维多段线" className="h-[31px] w-[191px] shrink-0 pl-1" />
        <div className="ml-3 flex gap-[10px]">
          <button type="button" aria-label="切换 PICKADD"><Svg><path d="M1 3h12v12H1zM8 10h14v12H8z" fill="#6bb5f0" stroke="#3b4453" /><path d="M17 0v12M11 6h12" stroke="#4fc28a" strokeWidth="3" /></Svg></button>
          <button type="button" aria-label="选择对象"><SelectBox /></button>
          <button type="button" aria-label="快速选择"><QuickSelect /></button>
        </div>
      </div>
      <div className="flex flex-col gap-1">
        <PropertyGroup
          title="常规"
          className="h-[267px]"
          rows={[
            ['颜色', swatchValue],
            ['图层', '0'],
            ['线型', lineValue],
            ['线型比例', '1'],
            ['打印样式', <span className="text-[#8d95a2]">ByColor</span>],
            ['线宽', lineValue],
            ['透明度', 'ByLayer'],
            ['超链接', ''],
            ['厚度', '0'],
          ]}
        />
        <PropertyGroup title="三维效果" rows={[['材质', 'ByLayer']]} />
        <PropertyGroup
          title="几何图形"
          className="h-[118px]"
          rows={[['当前顶点', '1'], ['顶点 X 坐标', '9250'], ['顶点 Y 坐标', '-2850'], ['起始线段宽度', '0']]}
        />
      </div>
    </div>
  </aside>
);

const CommandLine = () => (
  <div className="absolute bottom-[55px] left-[392px] right-[236px] flex h-[65px]">
    <div className="flex w-[34px] shrink-0 flex-col items-center overflow-hidden bg-[#232a36]">
      <Svg w={26} h={20}>
        {[6, 10].map((y) => [1, 5, 9, 13, 17, 21].map((x) => <rect key={`${x}-${y}`} x={x} y={y} width="3" height="3" fill={LIGHT} />))}
      </Svg>
      <button type="button" aria-label="关闭" className="pt-[2px]"><Svg w={18} h={18}><path d="M4 3l9 11M13 3L4 14" stroke={LIGHT} strokeWidth="2" /></Svg></button>
      <Svg w={22} h={26}><path d="M11 15l3-1-1 4 5 2 3-2-1 6H9z" fill={LIGHT} /></Svg>
    </div>
    <div className="flex flex-1 flex-col">
      <p className="flex h-9 items-center whitespace-nowrap bg-[#c2c2c2]/70 pl-1 pt-3 font-['Liberation_Mono','Noto_Sans_CJK_SC',monospace] text-black">
        命令: 指定对角点或 [栏选(F)/圈围(WP)/圈交(CP)]:
      </p>
      <div className="flex flex-1 items-center border-t border-[#4a4a4a] bg-[#fafafa]/70 pl-[6px] pr-1">
        <Svg w={40} h={18}>
          <path d="M1 1h21v15H1z" stroke="#444" strokeWidth="1.500" /><path d="M1 1h21v4H1z" fill="#444" /><path d="M4 8l3 2-3 2M9 13h5" stroke="#333" strokeWidth="1.500" />
          <path d="M26 6h10l-5 6z" fill="#333" />
        </Svg>
        <input type="text" aria-label="命令行" placeholder="键入命令" className="ml-[6px] min-w-0 flex-1 bg-transparent text-[#333] italic outline-none placeholder:text-[#555]" />
        <button type="button" aria-label="历史记录" className="rotate-180"><Caret size={10} color="#444" /></button>
      </div>
    </div>
  </div>
);

const Annotations = () => (
  <svg className="pointer-events-none absolute inset-0 h-full w-full" aria-hidden="true">
    <g transform="translate(760 460) scale(.3333)" fill="none" stroke="#f0220f" strokeWidth="18" strokeLinecap="round" strokeLinejoin="round">
      <path d="M380 47C440 44 500 52 560 66C650 88 740 128 795 165C838 198 858 222 855 265C852 330 845 380 810 430C775 470 730 510 640 535C590 550 560 553 520 553H400C320 545 250 520 190 485C120 430 80 380 82 320C90 240 140 170 210 130C270 95 330 70 390 48" />
      <path d="M400 45C450 36 500 34 540 37S600 42 612 47" />
      <path d="M545 388C590 430 700 450 780 465C900 480 990 497 1060 498L1275 495C1330 485 1370 465 1420 455C1480 445 1560 430 1610 400C1625 370 1635 330 1630 270C1610 215 1590 195 1555 180C1510 150 1470 135 1430 133L1290 128C1250 145 1225 165 1220 195C1215 240 1240 275 1300 305C1350 335 1400 350 1450 362" />
    </g>
    <circle cx="1264" cy="592" r="35" fill="#d9981a" fillOpacity=".55" />
    <g transform="translate(1266 594) rotate(-45)" stroke="#000" strokeWidth="1.500">
      <path d="M-4 8v36q4 6 9 0V8z" fill="#fff" />
      <path d="M0 0l5 9h-9z" fill="#000" /><path d="M-4 38h9M0 12v22" />
    </g>
  </svg>
);

export default function App() {
  return (
    <div className="relative flex h-screen flex-col overflow-hidden bg-black font-['Noto_Sans','Noto_Sans_CJK_SC',sans-serif] text-[17px] text-[#e1e4e9]">
      <div className="shrink-0 bg-linear-to-b from-[#424c5f] to-[#4a5468]">
        <TitleBar />
        <nav className="-ml-[17px] flex h-8 items-center gap-[35px] whitespace-nowrap pb-[2px] pt-[6px] text-[#bcc2cb]">
          {menus.map((m) => <button key={m} type="button">{m}</button>)}
        </nav>
      </div>
      <nav className="-ml-[33px] flex h-[34px] shrink-0 items-end whitespace-nowrap bg-[#20272f] text-[#c3c8d0]">
        {tabs.map((t, i) => (
          <button key={t} type="button" className={`h-7 px-[14px] pt-0.5 ${i === 0 ? 'bg-[#3b4453] text-white' : ''}`}>{t}</button>
        ))}
        <button type="button" aria-label="最小化功能区" className="ml-[35px] flex h-7 items-center gap-[6px] pt-0.5">
          <Svg w={21} h={12}><path d="M0 0h21v12H0z" fill="#fff" /><path d="M7 9h7l-3.500-4z" fill="#333" /></Svg>
          <Caret size={7} />
        </button>
      </nav>
      <div className="shrink-0"><Ribbon /></div>
      <ModelSpace />
      <StatusBar />
      <Palette />
      <CommandLine />
      <Annotations />
      <div className="absolute inset-x-0 top-[263px] flex h-[203px] items-center overflow-hidden bg-[#ffdf00] pb-7 pl-[46px]">
        <h1 className="whitespace-nowrap font-['Noto_Sans_CJK_SC',sans-serif] text-[119px] font-black leading-none text-black">如何用CAD，把椭圆转成多段线？</h1>
      </div>
    </div>
  );
}
